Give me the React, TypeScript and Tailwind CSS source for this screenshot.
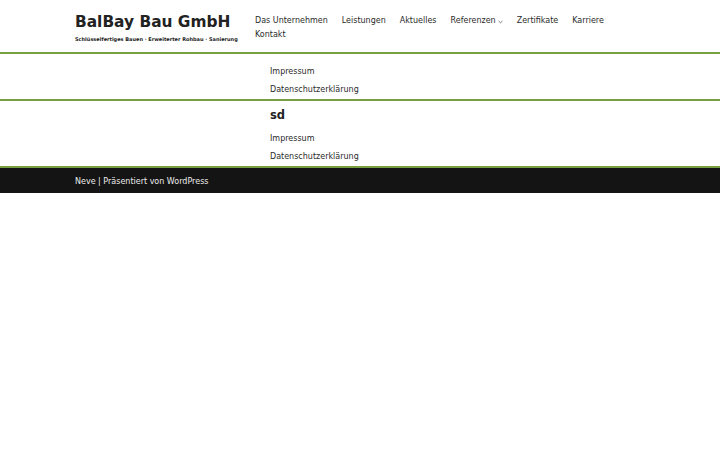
import React from "react";

const font = { fontFamily: '"DejaVu Sans", Verdana, sans-serif' };

export default function App() {
  const nav = ["Das Unternehmen", "Leistungen", "Aktuelles", "Referenzen", "Zertifikate", "Karriere", "Kontakt"];
  return (
    <div className="w-[720px] h-[450px] bg-white text-[#2b2b2b]" style={font}>
      <header className="h-[52px] flex">
        <div className="w-[570px] mx-auto flex">
          <div className="w-[180px] pt-[12px] flex flex-col">
            <div className="text-[15.4px] leading-[20px] font-bold text-[#222] whitespace-nowrap">BalBay Bau GmbH</div>
            <div className="mt-[4px] text-[5px] leading-[7px] font-bold text-[#222] whitespace-nowrap">
              Schlüsselfertiges Bauen · Erweiterter Rohbau · Sanierung
            </div>
          </div>
          <nav className="w-[390px] self-start flex flex-wrap content-start gap-x-[14px] pt-[14px] text-[8px] leading-[14px] text-[#2b2b2b]">
            {nav.map((n) => (
              <span key={n} className="flex items-center whitespace-nowrap">
                {n}
                {n === "Referenzen" && (
                  <svg width="5" height="4" viewBox="0 0 5 4" className="ml-[2px] mt-[1px]">
                    <path d="M0.6 1 L2.5 2.8 L4.4 1" stroke="#555" strokeWidth="0.8" fill="none" />
                  </svg>
                )}
              </span>
            ))}
          </nav>
        </div>
      </header>
      <div className="h-[2px] bg-[#78a040]" />
      <section className="h-[45px] flex">
        <div className="w-[570px] mx-auto pl-[195px] pt-[9px] flex flex-col text-[8px] leading-[18px]">
          <span>Impressum</span>
          <span>Datenschutzerklärung</span>
        </div>
      </section>
      <div className="h-[2px] bg-[#78a040]" />
      <section className="h-[65px] flex">
        <div className="w-[570px] mx-auto pl-[195px] pt-[5.5px] flex flex-col text-[8px]">
          <span className="text-[11.5px] leading-[17px] font-bold text-[#222]">sd</span>
          <span className="mt-[6px] leading-[18px]">Impressum</span>
          <span className="leading-[18px]">Datenschutzerklärung</span>
        </div>
      </section>
      <div className="h-[2px] bg-[#78a040]" />
      <footer className="h-[25px] bg-[#141414] flex">
        <div className="w-[570px] mx-auto flex items-center pt-[3px] text-[8px] text-[#ececec]">
          Neve | Präsentiert von WordPress
        </div>
      </footer>
    </div>
  );
}
